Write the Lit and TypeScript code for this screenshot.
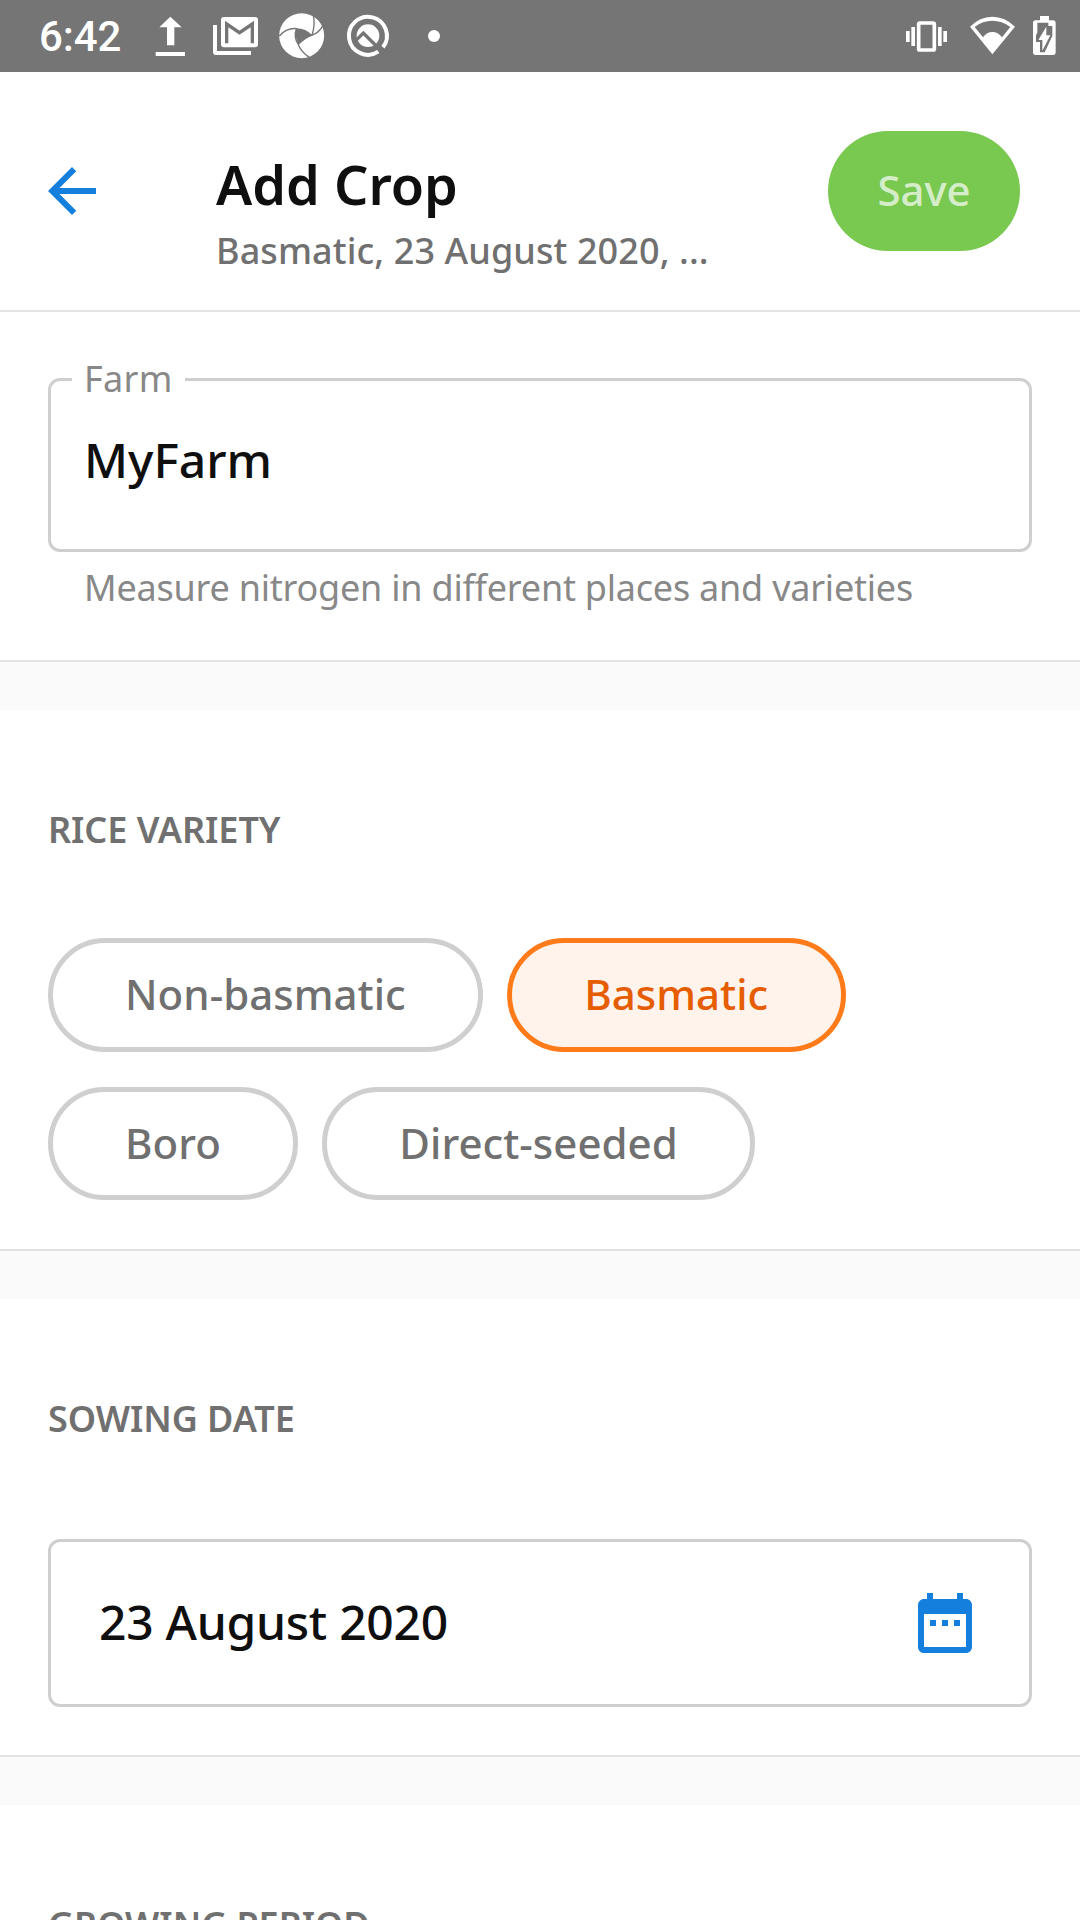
import { LitElement, html, css } from "lit";
import { customElement, state } from "lit/decorators.js";
import { classMap } from "lit/directives/class-map.js";

const uploadIcon = html`<svg viewBox="438 36 144 144">
  <path fill="#fff" d="M511 50L545 82H523V136H501V82H478zM467 156H555V168H467z" />
</svg>`;

const mailIcon = html`<svg viewBox="636 36 144 144">
  <path fill="#fff" d="M639 75H651V153H753V165H649Q639 165 639 155z" />
  <rect x="663" y="51" width="111" height="91" rx="9" fill="#fff" />
  <path fill="none" stroke="#757575" stroke-width="10" d="M680 130V72L718.500 98L757 72V130" />
</svg>`;

const apertureIcon = html`<svg viewBox="834 36 144 144">
  <circle cx="905" cy="107" r="67.500" fill="#fff" />
  <path fill="#757575" d="M889 85Q918 86 936 105Q912 115 895 134Q882 108 889 85z" />
  <g fill="none" stroke="#757575" stroke-width="4">
    <path d="M936 106Q946 76 940 44" />
    <path d="M838 108Q860 82 892 86" />
    <path d="M935 106Q958 98 969 76" />
    <path d="M889 86Q880 112 895 134Q904 156 928 172" />
    <path d="M895 133Q915 112 936 105" />
  </g>
</svg>`;

const ringIcon = html`<svg viewBox="1032 36 144 144">
  <path fill="none" stroke="#fff" stroke-width="12" d="M1149 142A57 57 0 1 0 1135 155" />
  <circle cx="1104" cy="107" r="34" fill="#fff" />
  <path fill="none" stroke="#757575" stroke-width="10" d="M1068 121L1090 99L1138 147" />
</svg>`;

const dotIcon = html`<svg viewBox="1230 36 144 144"><circle cx="1302" cy="108" r="18" fill="#fff" /></svg>`;

const vibrateIcon = html`<svg viewBox="60 36 144 144">
  <rect x="116" y="69" width="47" height="81" rx="4" fill="none" stroke="#fff" stroke-width="11" />
  <path fill="#fff" d="M78 93H89V126H78zM94 81H105V138H94zM174 81H185V138H174zM190 93H201V126H190z" />
</svg>`;

const wifiIcon = html`<svg viewBox="264 36 144 144">
  <path fill="#fff" fill-rule="evenodd"
    d="M337 163L270 80Q299 50 337 50Q375 50 405 80zM284 81L309 112Q320 96 337 96Q354 96 366 112L391 81Q366 62 337 62Q308 62 284 81z" />
</svg>`;

const batteryIcon = html`<svg viewBox="420 36 144 144">
  <path fill="#fff" d="M480 48H507V61H519Q527 61 527 69V157Q527 165 519 165H467Q459 165 459 157V69Q459 61 467 61H480z" />
  <path fill="#757575" d="M472 68H505V78H517V108L494 157H480V126H468V106L472 98z" />
  <path fill="#fff" d="M499 80V106H511L487 152V120H475z" />
</svg>`;

const backIcon = html`<svg class="back" viewBox="0 0 24 24">
  <path fill="#147fdd" d="M20 11H7.830l5.590-5.590L12 4l-8 8 8 8 1.410-1.410L7.830 13H20v-2z" />
</svg>`;

const calendarIcon = html`<svg class="calendar" viewBox="0 0 24 24">
  <path fill="#147fdd"
    d="M9 11H7v2h2v-2zm4 0h-2v2h2v-2zm4 0h-2v2h2v-2zm2-7h-1V2h-2v2H8V2H6v2H5c-1.110 0-1.990.9-1.990 2L3 20c0 1.100.89 2 2 2h14c1.100 0 2-.9 2-2V6c0-1.100-.9-2-2-2zm0 16H5V9h14v11z" />
</svg>`;

@customElement("app-root")
export class AppRoot extends LitElement {
  @state() private variety = "Basmatic";

  private rows = [
    ["Non-basmatic", "Basmatic"],
    ["Boro", "Direct-seeded"],
  ];

  static styles = css`
    :host {
      display: block;
      width: 1080px;
      height: 1920px;
      overflow: hidden;
      background: #fff;
      color: #0f0f0f;
      font-family: "Noto Sans", sans-serif;
    }
    * { box-sizing: border-box; }
    svg { display: block; width: 48px; height: 48px; flex: none; }
    .status {
      height: 72px;
      padding: 0 12px 0 39px;
      display: flex;
      align-items: center;
      background: #757575;
      color: #fff;
    }
    .time {
      width: 107px;
      padding-top: 1px;
      font: 500 42px/72px Roboto, sans-serif;
      letter-spacing: -0.1px;
    }
    .notices { display: flex; gap: 18px; flex: 1; }
    .system { display: flex; }
    .system svg:nth-child(2) { margin: 0 4px 0 20px; }
    header {
      height: 240px;
      padding: 0 60px 0 36px;
      display: flex;
      align-items: center;
      border-bottom: 2px solid #e4e4e4;
    }
    .back, .calendar { width: 72px; height: 72px; }
    .titles { flex: 1; padding: 45px 0 0 108px; }
    .title { font-size: 54px; font-weight: 600; line-height: 64px; white-space: nowrap; }
    .subtitle {
      margin-top: 11px;
      font-size: 36px;
      font-weight: 500;
      letter-spacing: 0.1px;
      line-height: 48px;
      color: #707070;
      white-space: nowrap;
    }
    .save {
      width: 192px;
      height: 120px;
      padding-bottom: 3px;
      border-radius: 60px;
      display: flex;
      align-items: center;
      justify-content: center;
      background: #79c850;
      color: rgba(255, 255, 255, 0.7);
      font-size: 42px;
      font-weight: 500;
      letter-spacing: -0.1px;
    }
    section { padding: 0 48px; border-bottom: 2px solid #e2e2e2; }
    .band { height: 48px; background: #fafafa; }
    .farm { height: 350px; padding-top: 66px; }
    .field {
      position: relative;
      border: 3px solid #cfcfcf;
      border-radius: 12px;
      font-size: 48px;
      font-weight: 500;
    }
    .outlined { height: 174px; padding: 43px 33px; line-height: 72px; }
    .label {
      position: absolute;
      left: 21px;
      top: -26px;
      padding: 0 12px;
      background: #fff;
      color: #888;
      font-size: 36px;
      font-weight: 400;
      letter-spacing: 0.3px;
      line-height: 48px;
    }
    .helper {
      padding: 12px 36px 0;
      font-size: 36px;
      letter-spacing: -0.22px;
      line-height: 48px;
      color: #888;
      white-space: nowrap;
    }
    .heading {
      padding-top: 96px;
      font-size: 36px;
      font-weight: 600;
      line-height: 48px;
      letter-spacing: -0.05px;
      color: #707070;
    }
    .varieties { height: 541px; }
    .pills { display: flex; flex-direction: column; gap: 35px; margin-top: 84px; }
    .row { display: flex; gap: 24px; }
    .pill {
      height: 114px;
      padding: 0 72.5px 3px 72px;
      border: 5px solid #cfcfcf;
      border-radius: 57px;
      display: flex;
      align-items: center;
      font-size: 42px;
      font-weight: 500;
      letter-spacing: 0.03px;
      color: #707070;
      white-space: nowrap;
    }
    .row:last-child .pill { height: 113px; }
    .pill.selected { border-color: #ff7a18; background: #fff3eb; color: #e65c00; }
    .sowing { height: 458px; }
    .date {
      height: 168px;
      margin-top: 96px;
      padding: 0 48px;
      display: flex;
      align-items: center;
      justify-content: space-between;
    }
    .date span { padding-bottom: 4px; letter-spacing: -0.28px; }
    .growing { border: 0; }
  `;

  render() {
    return html`
      <div class="status">
        <div class="time">6:42</div>
        <div class="notices">${uploadIcon}${mailIcon}${apertureIcon}${ringIcon}${dotIcon}</div>
        <div class="system">${vibrateIcon}${wifiIcon}${batteryIcon}</div>
      </div>
      <header>
        ${backIcon}
        <div class="titles">
          <div class="title">Add Crop</div>
          <div class="subtitle">Basmatic, 23 August 2020, ...</div>
        </div>
        <div class="save">Save</div>
      </header>
      <section class="farm">
        <div class="field outlined"><span class="label">Farm</span>MyFarm</div>
        <div class="helper">Measure nitrogen in different places and varieties</div>
      </section>
      <div class="band"></div>
      <section class="varieties">
        <div class="heading">RICE VARIETY</div>
        <div class="pills">
          ${this.rows.map(
            (row) => html`<div class="row">
              ${row.map(
                (name) => html`<div
                  class=${classMap({ pill: true, selected: name === this.variety })}
                  @click=${() => (this.variety = name)}
                >${name}</div>`
              )}
            </div>`
          )}
        </div>
      </section>
      <div class="band"></div>
      <section class="sowing">
        <div class="heading">SOWING DATE</div>
        <div class="field date"><span>23 August 2020</span>${calendarIcon}</div>
      </section>
      <div class="band"></div>
      <section class="growing"><div class="heading">GROWING PERIOD</div></section>
    `;
  }
}
